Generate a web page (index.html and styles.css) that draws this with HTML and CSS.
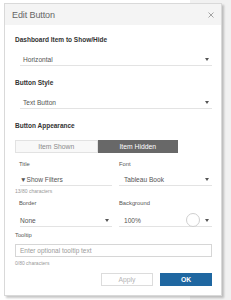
FILE: index.html
```html
<!DOCTYPE html>
<html>
<head>
<meta charset="utf-8">
<link rel="stylesheet" href="styles.css">
</head>
<body>
<div class="dialog">
  <div class="header">
    <span class="title">Edit Button</span>
    <svg class="close" width="6" height="6" viewBox="0 0 6 6"><path d="M0.5 0.5L5.5 5.5M5.5 0.5L0.5 5.5" stroke="#9a9a9a" stroke-width="0.9"/></svg>
  </div>
  <div class="content">
    <div class="label first">Dashboard Item to Show/Hide</div>
    <div class="select wide"><span>Horizontal</span><i class="caret"></i></div>
    <div class="label">Button Style</div>
    <div class="select wide"><span>Text Button</span><i class="caret"></i></div>
    <div class="label">Button Appearance</div>
    <div class="seg">
      <div class="seg-item">Item Shown</div>
      <div class="seg-item active">Item Hidden</div>
    </div>
    <div class="grid">
      <div class="small left">Title</div>
      <div class="small">Font</div>
      <div class="select field left-field"><span>▼Show Filters</span></div>
      <div class="select field"><span>Tableau Book</span><i class="caret"></i></div>
      <div class="count span">13/80 characters</div>
      <div class="small left row2">Border</div>
      <div class="small row2">Background</div>
      <div class="select field left-field row2f"><span>None</span><i class="caret"></i></div>
      <div class="select field row2f"><span>100%</span><span class="swatch-wrap"><i class="swatch"></i><i class="caret"></i></span></div>
    </div>
    <div class="small tip">Tooltip</div>
    <div class="input">Enter optional tooltip text</div>
    <div class="count">0/80 characters</div>
    <div class="actions">
      <div class="btn apply">Apply</div>
      <div class="btn ok">OK</div>
    </div>
  </div>
</div>
</body>
</html>
```
FILE: styles.css
```css
html, body {
  margin: 0;
  padding: 0;
}
body {
  width: 231px;
  height: 300px;
  overflow: hidden;
  background: linear-gradient(to right, #ffffff 190px, #f1f1f1 190px);
  font-family: "Liberation Sans", Arial, sans-serif;
  padding-top: 3px;
  box-sizing: border-box;
}
.dialog {
  margin-left: 4px;
  width: 218px;
  box-sizing: border-box;
  background: #fff;
  border: 1px solid #d9d9d9;
  box-shadow: 2px 2px 2px rgba(0, 0, 0, 0.22);
}
.header {
  height: 21px;
  background: #f4f4f4;
  display: flex;
  align-items: center;
  justify-content: space-between;
  padding: 0 7px 0 7px;
}
.title {
  font-size: 9px;
  color: #666;
  letter-spacing: -0.1px;
}
.close {
  display: block;
  margin-right: 0;
}
.content {
  padding: 0 9px 9px 10px;
}
.label {
  font-size: 6.5px;
  font-weight: bold;
  color: #333;
  line-height: 10px;
  margin-top: 12px;
}
.label.first {
  margin-top: 10px;
}
.select {
  display: flex;
  align-items: center;
  justify-content: space-between;
  height: 12px;
  border-bottom: 1px solid #e3e3e3;
  font-size: 6.6px;
  color: #555;
  box-sizing: content-box;
}
.select.wide {
  margin-top: 8px;
  margin-left: 5px;
  padding-left: 3px;
  padding-right: 3px;
}
.caret {
  display: block;
  width: 0;
  height: 0;
  border-left: 2px solid transparent;
  border-right: 2px solid transparent;
  border-top: 3px solid #555;
}
.seg {
  display: flex;
  margin-top: 9px;
  width: 163px;
  height: 13px;
}
.seg-item {
  flex: 1;
  display: flex;
  align-items: center;
  justify-content: center;
  font-size: 6.8px;
  box-sizing: border-box;
}
.seg-item:first-child {
  background: #f8f8f8;
  border: 1px solid #e2e2e2;
  color: #8a8a8a;
}
.seg-item.active {
  background: #686868;
  color: #fff;
}
.grid {
  display: grid;
  grid-template-columns: 98px 93px;
  column-gap: 6px;
  align-items: start;
}
.small {
  font-size: 5.8px;
  color: #555;
  line-height: 9px;
  margin-top: 7px;
}
.small.left {
  padding-left: 4px;
}
.small.row2 {
  margin-top: 4px;
}
.field {
  margin-top: 4px;
  padding-left: 5px;
  padding-right: 3px;
}
.left-field {
  margin-left: 5px;
  padding-left: 0;
  margin-right: 1px;
}
.row2f {
  margin-top: 6px;
}
.count {
  font-size: 5px;
  color: #999;
  line-height: 8px;
  margin-top: 1px;
}
.span {
  grid-column: 1 / span 2;
}
.swatch-wrap {
  display: flex;
  align-items: center;
  gap: 5px;
}
.swatch {
  display: block;
  width: 12px;
  height: 12px;
  border: 1px solid #cfcfcf;
  border-radius: 50%;
  background: #fff;
}
.small.tip {
  margin-top: 4px;
}
.input {
  margin-top: 4px;
  height: 13px;
  box-sizing: border-box;
  border: 1px solid #d6d6d6;
  font-size: 6.5px;
  color: #9a9a9a;
  display: flex;
  align-items: center;
  padding-left: 4px;
}
.content > .count {
  margin-top: 2px;
}
.actions {
  display: flex;
  justify-content: flex-end;
  gap: 7px;
  margin-top: 6px;
}
.btn {
  width: 52px;
  height: 13px;
  box-sizing: border-box;
  display: flex;
  align-items: center;
  justify-content: center;
  font-size: 6.8px;
}
.apply {
  border: 1px solid #dcdcdc;
  color: #b5b5b5;
  background: #fff;
}
.ok {
  background: #1f67a1;
  color: #fff;
  font-weight: bold;
}
```
